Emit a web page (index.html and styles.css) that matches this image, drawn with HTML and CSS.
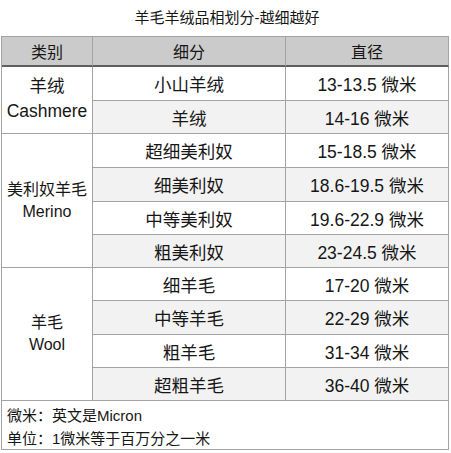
FILE: index.html
```html
<!DOCTYPE html>
<html lang="zh-CN">
<head>
<meta charset="utf-8">
<title>羊毛羊绒品相划分</title>
<link rel="stylesheet" href="styles.css">
</head>
<body>
<div class="title">羊毛羊绒品相划分-越细越好</div>
<div class="table">
  <div class="cell head">类别</div>
  <div class="cell head">细分</div>
  <div class="cell head">直径</div>

  <div class="cell cat cat-big span2">羊绒<br>Cashmere</div>
  <div class="cell">小山羊绒</div>
  <div class="cell">13-13.5 微米</div>
  <div class="cell alt">羊绒</div>
  <div class="cell alt">14-16 微米</div>

  <div class="cell cat span4">美利奴羊毛<br>Merino</div>
  <div class="cell">超细美利奴</div>
  <div class="cell">15-18.5 微米</div>
  <div class="cell alt">细美利奴</div>
  <div class="cell alt">18.6-19.5 微米</div>
  <div class="cell">中等美利奴</div>
  <div class="cell">19.6-22.9 微米</div>
  <div class="cell alt">粗美利奴</div>
  <div class="cell alt">23-24.5 微米</div>

  <div class="cell cat span4">羊毛<br>Wool</div>
  <div class="cell">细羊毛</div>
  <div class="cell">17-20 微米</div>
  <div class="cell alt">中等羊毛</div>
  <div class="cell alt">22-29 微米</div>
  <div class="cell">粗羊毛</div>
  <div class="cell">31-34 微米</div>
  <div class="cell alt">超粗羊毛</div>
  <div class="cell alt">36-40 微米</div>

  <div class="cell note">微米：英文是Micron<br>单位：1微米等于百万分之一米</div>
</div>
</body>
</html>
```

FILE: styles.css
```css
html, body {
  margin: 0;
  padding: 0;
  background: #ffffff;
}

body {
  font-family: "Liberation Sans", "Noto Sans CJK SC", sans-serif;
  color: #161616;
  width: 451px;
}

.title {
  height: 36px;
  line-height: 36px;
  text-align: center;
  font-size: 15px;
  padding-left: 3px;
}

.table {
  margin-left: 1px;
  width: 447px;
  border-left: 1px solid #a3a3a3;
  border-top: 1px solid #a3a3a3;
  display: grid;
  grid-template-columns: 91px 193px 163px;
  grid-template-rows: 30px 34px 33px 34px 34px 33px 33px 33px 34px 33px 33px 49px;
}

.cell {
  border-right: 1px solid #a3a3a3;
  border-bottom: 1px solid #a3a3a3;
  display: flex;
  align-items: center;
  justify-content: center;
  text-align: center;
  font-size: 17.5px;
  background: #ffffff;
}

.head {
  background: #cbcbcb;
  font-size: 16px;
  border-bottom: 2px solid #5e5e5e;
}

.alt {
  background: #f2f2f2;
}

.cat {
  font-size: 16px;
  line-height: 22px;
}

.cat-big {
  font-size: 17.5px;
  line-height: 25px;
  padding-bottom: 2px;
}

.span2 {
  grid-row: span 2;
}

.span4 {
  grid-row: span 4;
}

.note {
  grid-column: 1 / -1;
  justify-content: flex-start;
  align-items: flex-start;
  text-align: left;
  font-size: 15px;
  line-height: 23px;
  padding: 3px 0 0 5px;
}
```
